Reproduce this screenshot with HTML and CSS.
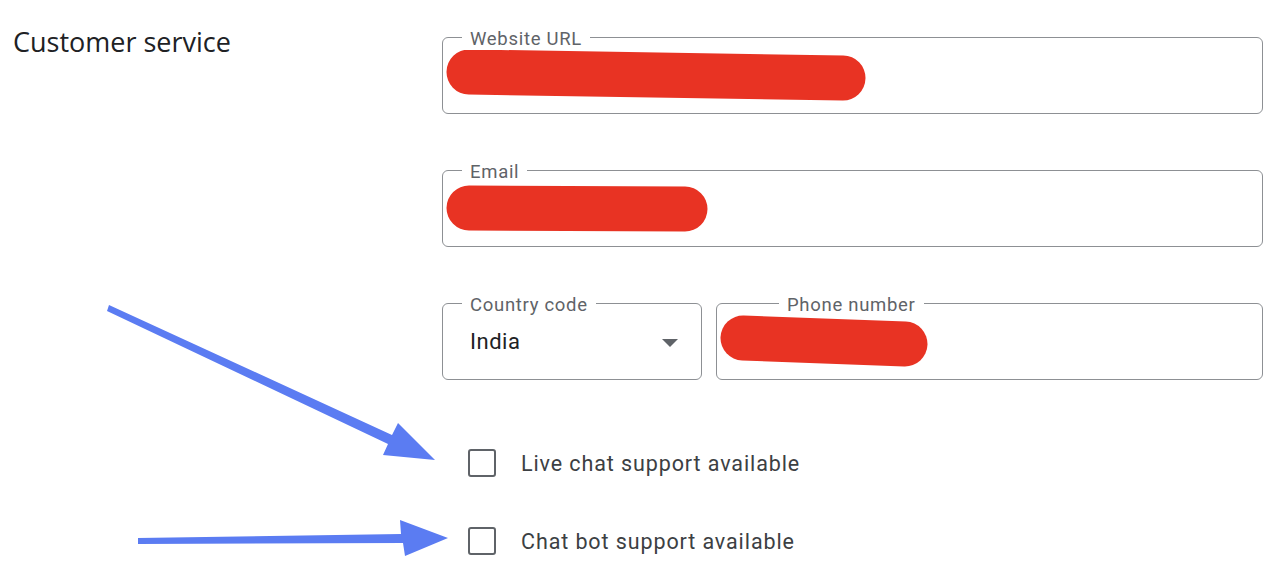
FILE: index.html
```html
<!DOCTYPE html>
<html lang="en">
<head>
    <meta charset="UTF-8">
    <title>Customer service</title>
    <link rel="stylesheet" href="styles.css">
</head>
<body>

    <div class="page">
        <h2 class="section-title">Customer service</h2>

        <div class="form">
            <fieldset class="field">
                <legend>Website URL</legend>
                <div class="field-body">
                    <svg class="redact" width="424" height="52" viewBox="0 0 424 52">
                        <line x1="24" y1="22" x2="398" y2="28" />
                    </svg>
                </div>
            </fieldset>

            <fieldset class="field">
                <legend>Email</legend>
                <div class="field-body">
                    <svg class="redact" width="266" height="50" viewBox="0 0 266 50">
                        <line x1="24" y1="24" x2="240" y2="25" />
                    </svg>
                </div>
            </fieldset>

            <div class="phone-row">
                <fieldset class="field field-country">
                    <legend>Country code</legend>
                    <div class="field-body select">
                        <span class="select-value">India</span>
                        <span class="select-arrow"></span>
                    </div>
                </fieldset>

                <fieldset class="field field-phone">
                    <legend>Phone number</legend>
                    <div class="field-body">
                        <svg class="redact" width="212" height="56" viewBox="0 0 212 56">
                            <line x1="24" y1="24" x2="186" y2="30" />
                        </svg>
                    </div>
                </fieldset>
            </div>

            <div class="checks">
                <label class="check">
                    <span class="check-box"></span>
                    <span class="check-label">Live chat support available</span>
                </label>
                <label class="check">
                    <span class="check-box"></span>
                    <span class="check-label">Chat bot support available</span>
                </label>
            </div>
        </div>
    </div>

    <!-- annotation arrows -->
    <svg class="arrows" width="1280" height="581" viewBox="0 0 1280 581">
        <polygon points="109,305 392,435 398,423 435,460 383,455 388,444 107,311" />
        <polygon points="138,538 401,534 400,520 448,538 405,556 403,543 138,544" />
    </svg>

</body>
</html>
```

FILE: styles.css
```css
body {
    margin: 0;
    background-color: #fff;
    font-family: Roboto, Arial, sans-serif;
    color: #202124;
    position: relative;
    height: 581px;
    overflow: hidden;
}

.page {
    display: flex;
    align-items: flex-start;
}

.section-title {
    width: 442px;
    flex-shrink: 0;
    margin: 25px 0 0 0;
    padding-left: 13px;
    box-sizing: border-box;
    font-family: "Open Sans", Arial, sans-serif;
    font-size: 27px;
    line-height: 34px;
    font-weight: 400;
    color: #202124;
}

.form {
    width: 821px;
    flex-shrink: 0;
    padding-top: 26px;
    display: flex;
    flex-direction: column;
    gap: 45px;
}

.field {
    margin: 0;
    padding: 0 0 0 19px;
    border: 1px solid #8d9094;
    border-radius: 6px;
    min-width: 0;
}

.field legend {
    padding: 4px 8px 0;
    font-size: 18.5px;
    line-height: 18px;
    letter-spacing: 0.7px;
    color: #5f6368;
}

.field-body {
    height: 65px;
    margin-left: -19px;
    padding: 0 0 10px 0;
    box-sizing: border-box;
    display: flex;
    align-items: center;
}

.redact line {
    stroke: #e83323;
    stroke-width: 45;
    stroke-linecap: round;
}

.redact {
    display: block;
    margin-left: 2px;
}

.phone-row {
    display: flex;
    gap: 14px;
}

.field-country {
    width: 260px;
    box-sizing: border-box;
}

.field-phone {
    flex: 1;
}

.field-phone legend {
    margin-left: 43px;
}

.select {
    justify-content: space-between;
    padding-left: 27px;
    padding-right: 23px;
}

.select-value {
    font-size: 22px;
    letter-spacing: 0.5px;
    color: #202124;
}

.select-arrow {
    width: 0;
    height: 0;
    border-left: 8px solid transparent;
    border-right: 8px solid transparent;
    border-top: 8px solid #5f6368;
    margin-top: 2px;
}

.checks {
    margin-top: 14px;
    display: flex;
    flex-direction: column;
    gap: 30px;
}

.check {
    height: 48px;
    display: flex;
    align-items: center;
    padding-left: 26px;
    cursor: pointer;
}

.check-box {
    width: 28px;
    height: 28px;
    box-sizing: border-box;
    border: 2px solid #5f6368;
    border-radius: 3px;
}

.check-label {
    margin-left: 25px;
    font-size: 21.5px;
    color: #3c4043;
    letter-spacing: 0.9px;
}

.arrows {
    position: absolute;
    left: 0;
    top: 0;
    pointer-events: none;
}

.arrows polygon {
    fill: #5b7cf2;
}
```
